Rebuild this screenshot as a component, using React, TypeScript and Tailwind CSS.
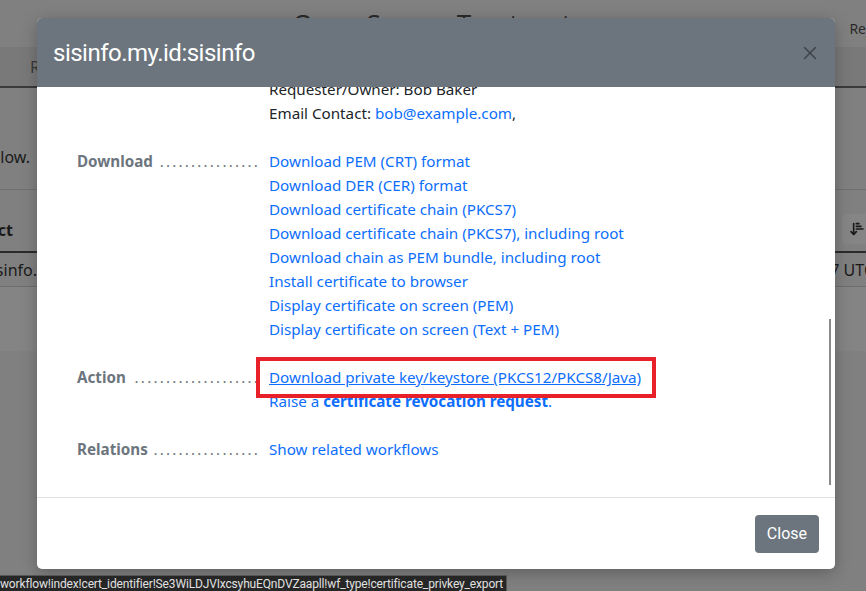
import { X, ArrowDownNarrowWide } from 'lucide-react'

const downloads = [
  'Download PEM (CRT) format',
  'Download DER (CER) format',
  'Download certificate chain (PKCS7)',
  'Download certificate chain (PKCS7), including root',
  'Download chain as PEM bundle, including root',
  'Install certificate to browser',
  'Display certificate on screen (PEM)',
  'Display certificate on screen (Text + PEM)',
]

function Label({ text }: { text: string }) {
  return (
    <div className="mr-[9px] flex w-[183px] shrink-0 items-baseline gap-[6px]">
      <span className="shrink-0 font-bold text-[#6c757d]">{text}</span>
      <span className="flex flex-1 justify-end overflow-hidden whitespace-nowrap text-[#6c757d]">
        <span className="tracking-[2.2px]">..................................................</span>
      </span>
    </div>
  )
}

function Backdrop() {
  return (
    <div className="flex h-[591px] flex-col bg-[#808080] text-[#1a1a1a]">
      {/* page header */}
      <div className="flex h-[47px] items-start justify-between">
        <div className="w-10" />
        <div className="mt-[4px] text-[26px] text-[#2a2a2a]">Open Source Trustcenter</div>
        <div className="mt-[18px] text-[14px] text-[#2a2a2a]">Re</div>
      </div>
      <div className="flex h-[41px] items-center border-b-2 border-[#3a3a3a] bg-[#797979] pl-[30px] text-[16px] text-[#3a3a3a]">
        R
      </div>
      <div className="flex h-[102px] items-end border-b border-[#707070] pb-[20px] text-[16px]">
        <div className="flex w-[30px] justify-end whitespace-nowrap">Please see below.</div>
      </div>
      <div className="flex h-[63px] items-center justify-between border-b-2 border-[#2a2a2a] pt-[18px]">
        <div className="flex w-[13px] justify-end whitespace-nowrap font-bold">Subject</div>
        <span className="mr-[-6px] mt-[-2px] flex h-[30px] w-[30px] items-center justify-center rounded bg-[#858585]">
          <ArrowDownNarrowWide className="h-[16px] w-[16px] text-[#1a1a1a]" strokeWidth={2.5} />
        </span>
      </div>
      <div className="flex h-[34px] items-center justify-between border-b border-[#6e6e6e] text-[16px]">
        <div className="flex w-[37px] justify-end whitespace-nowrap">sisinfo.</div>
        <span className="mr-[-8px]">7 UTC</span>
      </div>
      <div className="h-[64px] bg-[#848484]" />
      <div className="flex-1" />
    </div>
  )
}

export default function App() {
  return (
    <div
      className="relative h-[591px] w-[866px] overflow-hidden"
      style={{ fontFamily: '"Noto Sans", "Open Sans", sans-serif' }}
    >
      <Backdrop />

      {/* modal */}
      <div className="absolute left-[37px] top-[18px] flex h-[551px] w-[798px] flex-col overflow-hidden rounded-[5px] bg-white shadow-[0_4px_16px_rgba(0,0,0,0.25)]">
        <div className="flex h-[69px] shrink-0 items-center justify-between bg-[#6c757d] pl-[16px] pr-[14px]">
          <h5 className="text-[24px] tracking-[-0.5px] text-white" style={{ fontFamily: 'Roboto, sans-serif' }}>
            sisinfo.my.id:sisinfo
          </h5>
          <X className="h-[22px] w-[22px] text-[#3d434a]" strokeWidth={1.6} />
        </div>

        <div className="relative h-[410px] shrink-0 overflow-hidden">
          <div className="mt-[-10px] pl-[40px] pr-[40px] text-[15.2px] leading-[24px] text-[#212529]">
            <div className="flex">
              <div className="w-[192px] shrink-0" />
              <div>
                <div>Requester/Owner: Bob Baker</div>
                <div>
                  Email Contact: <span className="text-[#0d6efd]">bob@example.com</span>,
                </div>
              </div>
            </div>

            <div className="mt-[24px] flex">
              <Label text="Download" />
              <div className="flex flex-col text-[#0d6efd]">
                {downloads.map((d) => (
                  <span key={d}>{d}</span>
                ))}
              </div>
            </div>

            <div className="mt-[24px] flex">
              <Label text="Action" />
              <div className="flex flex-col text-[#0d6efd]">
                <div className="relative">
                  <span className="underline">Download private key/keystore (PKCS12/PKCS8/Java)</span>
                  <span className="absolute left-[-13px] top-[-8px] h-[41px] w-[400px] border-[4px] border-[#e8202a]" />
                </div>
                <span>
                  Raise a <b>certificate revocation request</b>.
                </span>
              </div>
            </div>

            <div className="mt-[24px] flex">
              <Label text="Relations" />
              <span className="text-[#0d6efd]">Show related workflows</span>
            </div>
          </div>
          <div className="absolute right-[4px] top-[232px] h-[166px] w-[2px] bg-[#8a8a8a]" />
        </div>

        <div className="flex flex-1 items-center justify-end border-t border-[#dee2e6] pr-[16px]">
          <button
            className="h-[38px] rounded-[4px] bg-[#6c757d] px-[12px] text-[16px] text-white"
            style={{ fontFamily: 'Roboto, sans-serif' }}
          >
            Close
          </button>
        </div>
      </div>

      {/* status bar */}
      <div
        className="absolute bottom-0 left-0 flex h-[16px] w-[507px] items-center overflow-hidden whitespace-nowrap border-t border-r border-[#555] bg-[#262626] text-[12px] tracking-[-0.15px] text-[#e0e0e0]"
        style={{ fontFamily: 'Roboto, sans-serif' }}
      >
        workflow!index!cert_identifier!Se3WiLDJVIxcsyhuEQnDVZaapll!wf_type!certificate_privkey_export
      </div>
    </div>
  )
}
